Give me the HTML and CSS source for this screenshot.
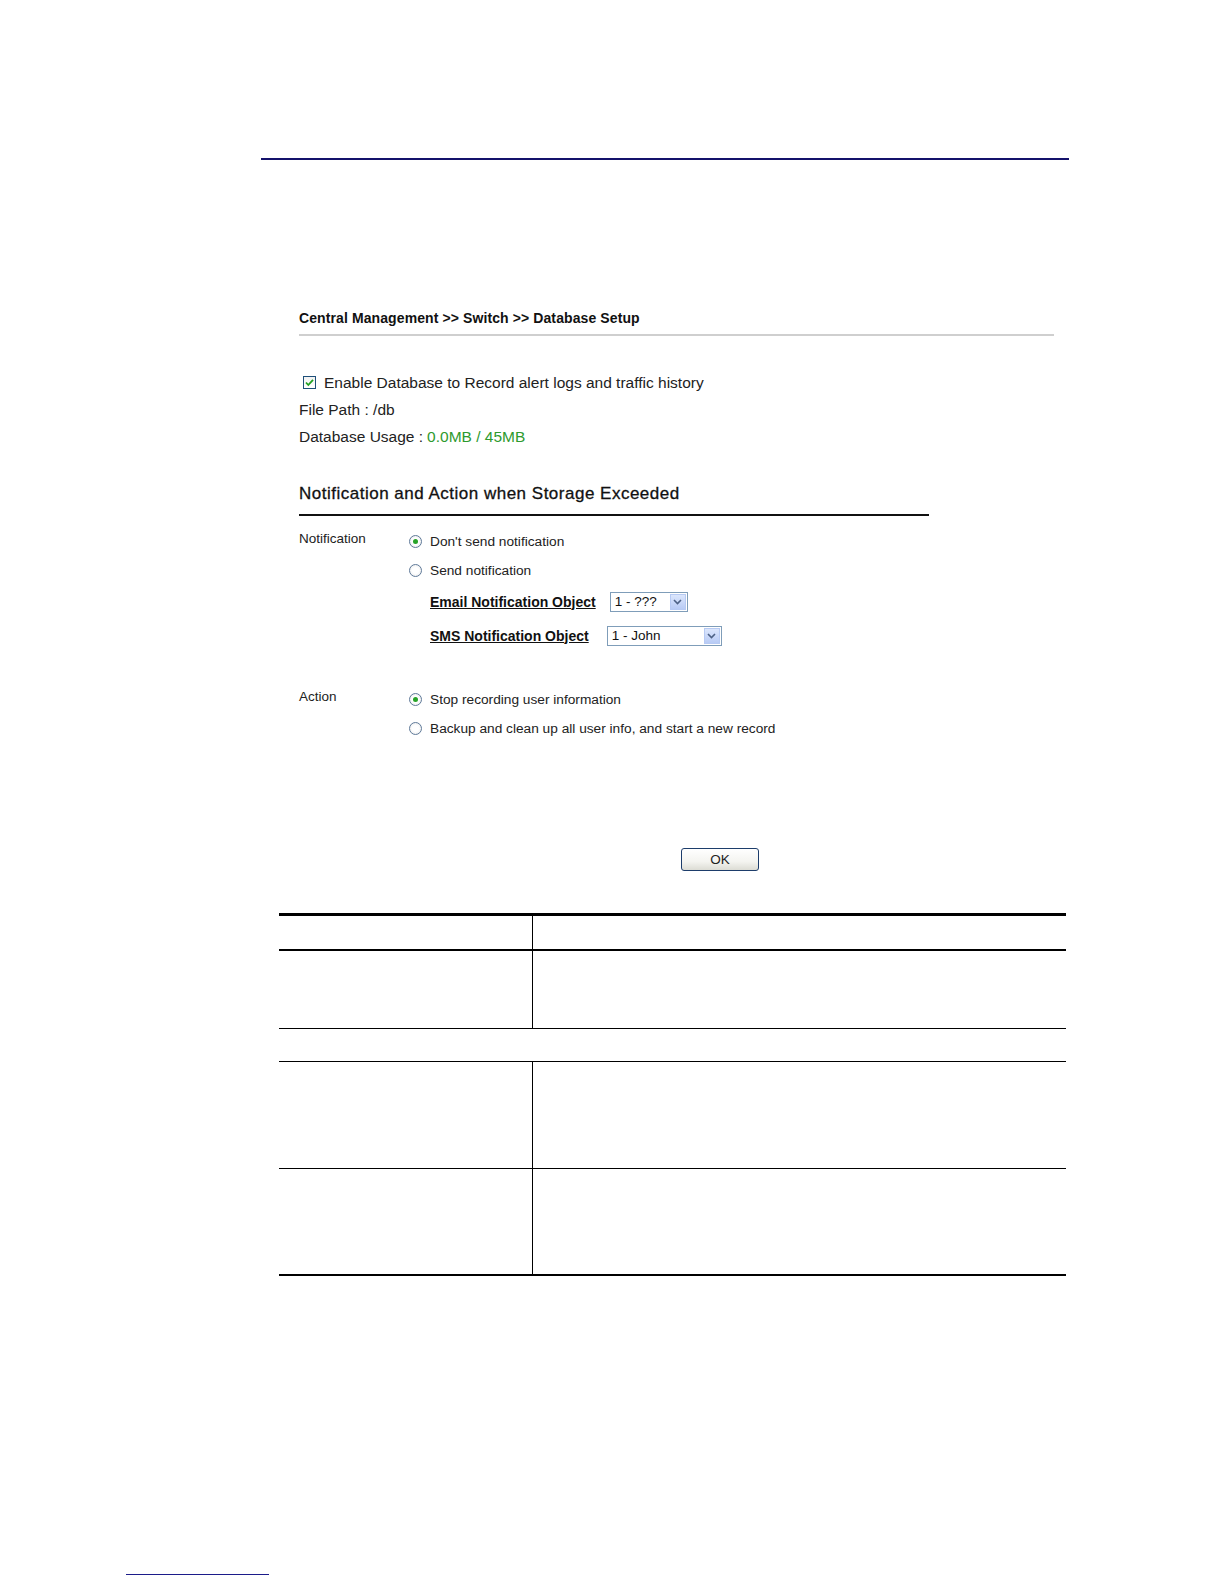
FILE: index.html
```html
<!DOCTYPE html>
<html>
<head>
<meta charset="utf-8">
<link rel="stylesheet" href="styles.css">
</head>
<body>
<div class="page">
  <div class="toprule"></div>

  <div class="shot">
    <div class="crumb">Central Management &gt;&gt; Switch &gt;&gt; Database Setup</div>
    <div class="crumb-rule"></div>

    <div class="db">
      <div class="line"><span class="chk"><svg width="11" height="11" viewBox="0 0 11 11"><path d="M2 5.5 L4.3 8 L9 2.8" fill="none" stroke="#21a121" stroke-width="1.8"/></svg></span>Enable Database to Record alert logs and traffic history</div>
      <div class="line">File Path : /db</div>
      <div class="line">Database Usage : <span class="green">0.0MB / 45MB</span></div>
    </div>

    <div class="sect-title">Notification and Action when Storage Exceeded</div>
    <div class="sect-rule"></div>

    <div class="group">
      <div class="label">Notification</div>
      <div class="opts">
        <div class="opt"><span class="radio on"></span>Don't send notification</div>
        <div class="opt"><span class="radio"></span>Send notification</div>
        <div class="obj obj-email"><span class="objname">Email Notification Object</span><span class="sel w78"><span class="val">1 - ???</span><span class="arr"><svg width="9" height="6" viewBox="0 0 9 6"><path d="M1 1 L4.5 4.5 L8 1" fill="none" stroke="#4d6185" stroke-width="1.6"/></svg></span></span></div>
        <div class="obj obj-sms"><span class="objname">SMS Notification Object</span><span class="sel w115"><span class="val">1 - John</span><span class="arr"><svg width="9" height="6" viewBox="0 0 9 6"><path d="M1 1 L4.5 4.5 L8 1" fill="none" stroke="#4d6185" stroke-width="1.6"/></svg></span></span></div>
      </div>
    </div>

    <div class="group action">
      <div class="label">Action</div>
      <div class="opts">
        <div class="opt"><span class="radio on"></span>Stop recording user information</div>
        <div class="opt"><span class="radio"></span>Backup and clean up all user info, and start a new record</div>
      </div>
    </div>

    <div class="btnrow"><span class="okbtn">OK</span></div>
  </div>

  <table class="doc">
    <tr class="head"><td class="c1"></td><td class="c2"></td></tr>
    <tr class="r1"><td class="c1"></td><td class="c2"></td></tr>
    <tr class="sec"><td colspan="2"></td></tr>
    <tr class="r2"><td class="c1"></td><td class="c2"></td></tr>
    <tr class="r3"><td class="c1"></td><td class="c2"></td></tr>
  </table>

  <div class="footrule"></div>
</div>
</body>
</html>
```

FILE: styles.css
```css
html, body {
  margin: 0;
  padding: 0;
  background: #ffffff;
}
body {
  font-family: "Liberation Sans", Arial, sans-serif;
  color: #111;
}
.page {
  width: 1224px;
  height: 1584px;
  padding-top: 158px;
  box-sizing: border-box;
}
.toprule {
  margin-left: 261px;
  width: 808px;
  height: 2px;
  background: #14126b;
}
.shot {
  margin-left: 299px;
  width: 755px;
  padding-top: 150px;
}
.crumb {
  font-weight: bold;
  font-size: 14px;
  letter-spacing: 0.1px;
  line-height: 16px;
  color: #111;
}
.crumb-rule {
  margin-top: 8px;
  height: 2px;
  background: #cfcfcf;
}
.db {
  margin-top: 33px;
}
.line {
  font-size: 15.5px;
  line-height: 27px;
  height: 27px;
  display: flex;
  align-items: center;
  color: #222;
}
.green { color: #2e9a2e; margin-left: 4px; }
.chk {
  width: 11px;
  height: 11px;
  border: 1px solid #1e4f79;
  margin: 0 8px 0 4px;
  display: inline-flex;
  align-items: center;
  justify-content: center;
  background: linear-gradient(#f2f2f2, #ffffff);
}
.sect-title {
  margin-top: 34px;
  font-size: 17px;
  letter-spacing: 0.5px;
  line-height: 20px;
  color: #111;
  -webkit-text-stroke: 0.3px #111;
}
.sect-rule {
  margin-top: 10px;
  width: 630px;
  height: 2px;
  background: #111;
}
.group {
  display: flex;
  margin-top: 16px;
}
.group.action { margin-top: 44px; }
.label {
  width: 110px;
  font-size: 13.5px;
  line-height: 14px;
  color: #222;
}
.opts {
  display: flex;
  flex-direction: column;
}
.opt {
  display: flex;
  align-items: center;
  font-size: 13.7px;
  height: 18px;
  margin-bottom: 11px;
  color: #222;
}
.radio {
  width: 11px;
  height: 11px;
  border-radius: 50%;
  border: 1px solid #5f7a99;
  margin-right: 8px;
  background: radial-gradient(circle, #ffffff 40%, #e6e6e6 100%);
  display: inline-flex;
  align-items: center;
  justify-content: center;
}
.radio.on::after {
  content: "";
  width: 5px;
  height: 5px;
  border-radius: 50%;
  background: #27a327;
}
.obj {
  display: flex;
  align-items: center;
  padding-left: 21px;
  height: 21px;
}
.obj-email { margin-top: 1px; }
.obj-sms { margin-top: 13px; }
.objname {
  font-weight: bold;
  font-size: 14px;
  text-decoration: underline;
  color: #111;
  margin-right: 14px;
}
.obj-sms .objname { margin-right: 18px; }
.sel {
  display: inline-flex;
  align-items: center;
  height: 20px;
  border: 1px solid #7f9db9;
  box-sizing: border-box;
  background: #fff;
  justify-content: space-between;
}
.w78 { width: 78px; }
.w115 { width: 115px; }
.val {
  font-size: 13.5px;
  padding-left: 4px;
  color: #111;
}
.arr {
  width: 16px;
  height: 16px;
  margin-right: 1px;
  background: linear-gradient(#dbe6fc, #b8cbf5);
  border: 1px solid #b7caf3;
  box-sizing: border-box;
  display: inline-flex;
  align-items: center;
  justify-content: center;
}
.btnrow {
  margin-top: 100px;
  padding-left: 382px;
}
.okbtn {
  display: inline-block;
  width: 78px;
  height: 23px;
  box-sizing: border-box;
  border: 1px solid #1d3d6b;
  border-radius: 3px;
  background: linear-gradient(#ffffff, #f4f4f0 60%, #dcdcd4);
  text-align: center;
  font-size: 13.5px;
  line-height: 21px;
  color: #222;
}
table.doc {
  margin-left: 279px;
  margin-top: 42px;
  width: 787px;
  border-collapse: collapse;
}
table.doc td { padding: 0; }
.doc .c1 { width: 253px; border-right: 1px solid #000; }
.doc .head td { height: 33px; border-top: 3px solid #000; border-bottom: 2px solid #000; }
.doc .r1 td { height: 77px; border-bottom: 1px solid #000; }
.doc .sec td { height: 32px; border-bottom: 1px solid #000; }
.doc .r2 td { height: 106px; border-bottom: 1px solid #000; }
.doc .r3 td { height: 105px; border-bottom: 2px solid #000; }
.footrule {
  margin-top: 298px;
  margin-left: 126px;
  width: 143px;
  height: 1px;
  background: #1c1c8a;
}
```
